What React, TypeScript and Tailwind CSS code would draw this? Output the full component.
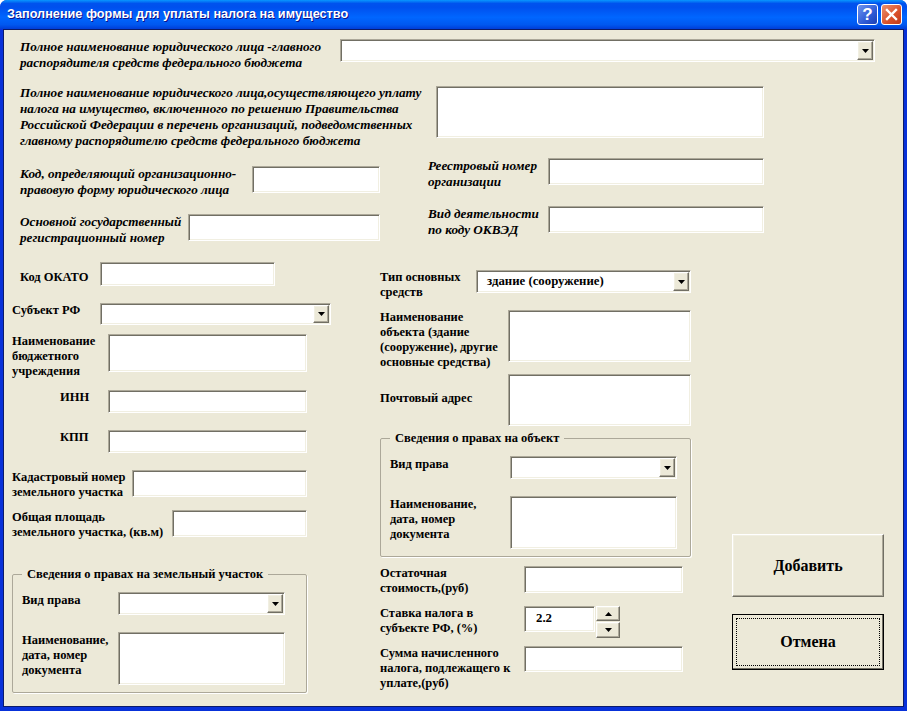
const sunken =
  "border border-[#aca899] border-r-white border-b-white bg-white shadow-[inset_1px_1px_0_#716f64,inset_-1px_-1px_0_#f1efe2]";
const raised =
  "bg-[#ece9d8] border border-white border-r-[#716f64] border-b-[#716f64] shadow-[inset_-1px_-1px_0_#aca899,inset_1px_1px_0_#f1efe2]";

function Box({ className }: { className: string }) {
  return <div className={`${sunken} shrink-0 ${className}`} />;
}

function Arrow({ up }: { up?: boolean }) {
  return (
    <svg width="7" height="4" viewBox="0 0 7 4" className="block">
      <path d={up ? "M3.5 0 L7 4 L0 4 Z" : "M0 0 H7 L3.5 4 Z"} fill="#000" />
    </svg>
  );
}

function Combo({ className, value }: { className: string; value?: string }) {
  return (
    <div className={`${sunken} shrink-0 flex items-stretch p-[1px] ${className}`}>
      <div className="flex-1 pl-[9px] flex items-center text-[12.8px] font-bold">{value}</div>
      <div className={`${raised} w-[16px] flex items-center justify-center`}>
        <Arrow />
      </div>
    </div>
  );
}

function Label({ className, lines, italic }: { className?: string; lines: string[]; italic?: boolean }) {
  return (
    <div className={`shrink-0 font-bold ${italic ? "italic text-[13.2px] leading-[16px]" : "text-[12.5px] leading-[15px]"} ${className ?? ""}`}>
      {lines.map((l) => (
        <div key={l} className="whitespace-nowrap">{l}</div>
      ))}
    </div>
  );
}

function GroupBox({ title, className, labelWidth }: { title: string; className: string; labelWidth: string }) {
  return (
    <div className={`relative border border-[#aca899] rounded-[2px] shadow-[1px_1px_0_#fff] ${className}`}>
      <span className="absolute -top-[8px] left-[9px] px-[5px] bg-[#ece9d8] text-[12.5px] leading-[15px] font-bold whitespace-nowrap">
        {title}
      </span>
      <div className="flex pt-[17px] pl-[9px]">
        <Label className={`${labelWidth} pt-[1px]`} lines={["Вид права"]} />
        <Combo className="w-[167px] h-[23px]" />
      </div>
      <div className="flex mt-[17px] pl-[9px]">
        <Label className={`${labelWidth} pt-[1px]`} lines={["Наименование,", "дата, номер", "документа"]} />
        <Box className="w-[167px] h-[53px]" />
      </div>
    </div>
  );
}

export default function App() {
  return (
    <div
      className="w-[907px] h-[711px] bg-[#0831d9] rounded-t-[7px] flex flex-col overflow-hidden text-black"
      style={{ fontFamily: '"Liberation Serif", "Times New Roman", serif' }}
    >
      {/* title bar */}
      <div className="h-[29px] shrink-0 flex items-center pl-[7px] pr-[5px] bg-[linear-gradient(180deg,#0997ff_0%,#0053ee_12%,#0050ee_25%,#0066ff_60%,#0058f0_85%,#003dd7_100%)]">
        <span className="flex-1 text-white text-[12.7px] font-bold [text-shadow:1px_1px_0_#0f1089]" style={{ fontFamily: '"Liberation Sans", Arial, sans-serif' }}>
          Заполнение формы для уплаты налога на имущество
        </span>
        <div className="w-[21px] h-[21px] mr-[3px] rounded-[3px] border border-white bg-[linear-gradient(135deg,#6d94ee,#2f5bd6_60%,#1c3fb4)] flex items-center justify-center text-white text-[17px] font-bold" style={{ fontFamily: '"Liberation Sans", Arial, sans-serif' }}>
          ?
        </div>
        <div className="w-[21px] h-[21px] rounded-[3px] border border-white bg-[linear-gradient(135deg,#e9916f,#d9502a_60%,#c0391a)] flex items-center justify-center">
          <svg width="13" height="13" viewBox="0 0 13 13">
            <path d="M2 2 L11 11 M11 2 L2 11" stroke="#fff" strokeWidth="2.4" strokeLinecap="square" />
          </svg>
        </div>
      </div>

      {/* window body */}
      <div className="flex-1 mx-[3px] mb-[4px] bg-[#ece9d8] border border-[#0a1a6a] overflow-hidden">
        <div className="flex mt-[9px]">
          <Label italic className="ml-[16px] w-[320px]" lines={["Полное наименование юридического лица -главного", "распорядителя средств федерального бюджета"]} />
          <Combo className="w-[535px] h-[23px]" />
        </div>
        <div className="flex mt-[14px]">
          <Label italic className="ml-[16px] w-[416px]" lines={["Полное наименование юридического лица,осуществляющего уплату", "налога на имущество, включенного по решению Правительства", "Российской Федерации в перечень организаций, подведомственных", "главному распорядителю средств федерального бюджета"]} />
          <Box className="w-[328px] h-[52px] mt-[1px]" />
        </div>

        <div className="flex mt-[9px]">
          <div className="w-[376px] ml-[16px] pt-[8px]">
            <div className="flex">
              <Label italic className="w-[232px]" lines={["Код, определяющий организационно-", "правовую форму юридического лица"]} />
              <Box className="w-[128px] h-[27px]" />
            </div>
            <div className="flex mt-[16px]">
              <Label italic className="w-[168px]" lines={["Основной государственный", "регистрационный номер"]} />
              <Box className="w-[192px] h-[27px]" />
            </div>
          </div>
          <div className="ml-[32px]">
            <div className="flex">
              <Label italic className="w-[120px]" lines={["Реестровый номер", "организации"]} />
              <Box className="w-[216px] h-[27px]" />
            </div>
            <div className="flex mt-[16px]">
              <Label italic className="w-[120px]" lines={["Вид деятельности", "по коду ОКВЭД"]} />
              <Box className="w-[216px] h-[27px]" />
            </div>
          </div>
        </div>

        <div className="flex mt-[16px]">
          {/* left column */}
          <div className="ml-[8px] w-[295px] shrink-0">
            <div className="flex">
              <Label className="w-[88px] pl-[8px] pt-[8px]" lines={["Код ОКАТО"]} />
              <Box className="w-[175px] h-[24px]" />
            </div>
            <div className="flex mt-[17px]">
              <Label className="w-[88px]" lines={["Субъект РФ"]} />
              <Combo className="w-[231px] h-[22px]" />
            </div>
            <div className="flex mt-[9px]">
              <Label className="w-[96px]" lines={["Наименование", "бюджетного", "учреждения"]} />
              <Box className="w-[199px] h-[38px]" />
            </div>
            <div className="flex mt-[11px]">
              <Label className="w-[96px] pl-[48px]" lines={["ИНН"]} />
              <Box className="w-[199px] h-[23px]" />
            </div>
            <div className="flex mt-[17px]">
              <Label className="w-[96px] pl-[48px]" lines={["КПП"]} />
              <Box className="w-[199px] h-[23px]" />
            </div>
            <div className="flex mt-[17px]">
              <Label className="w-[120px]" lines={["Кадастровый номер", "земельного участка"]} />
              <Box className="w-[175px] h-[27px]" />
            </div>
            <div className="flex mt-[10px]">
              <Label className="w-[160px]" lines={["Общая площадь", "земельного участка, (кв.м)"]} />
              <Box className="w-[135px] h-[27px]" />
            </div>
            <GroupBox className="mt-[34px] w-[295px] h-[119px]" labelWidth="w-[96px]" title="Сведения о правах на земельный участок" />
          </div>

          {/* middle column */}
          <div className="ml-[73px] w-[311px] shrink-0 pt-[8px]">
            <div className="flex">
              <Label className="w-[96px]" lines={["Тип основных", "средств"]} />
              <Combo className="w-[215px] h-[23px]" value="здание (сооружение)" />
            </div>
            <div className="flex mt-[10px]">
              <Label className="w-[128px]" lines={["Наименование", "объекта (здание", "(сооружение), другие", "основные средства)"]} />
              <Box className="w-[183px] h-[52px]" />
            </div>
            <div className="flex mt-[4px]">
              <Label className="w-[128px] pt-[17px]" lines={["Почтовый адрес"]} />
              <Box className="w-[183px] h-[52px]" />
            </div>
            <GroupBox className="mt-[12px] w-[311px] h-[119px]" labelWidth="w-[120px]" title="Сведения о правах на объект" />
            <div className="flex mt-[9px]">
              <Label className="w-[144px]" lines={["Остаточная", "стоимость,(руб)"]} />
              <Box className="w-[159px] h-[27px]" />
            </div>
            <div className="flex mt-[10px]">
              <Label className="w-[144px]" lines={["Ставка налога в", "субъекте РФ, (%)"]} />
              <div className={`${sunken} shrink-0 w-[71px] h-[26px] pl-[11px] flex items-center text-[12.8px] font-bold`}>2.2</div>
              <div className="ml-[1px] w-[24px]">
                <div className={`${raised} h-[15px] flex items-center justify-center`}>
                  <Arrow up />
                </div>
                <div className={`${raised} h-[16px] mt-[1px] flex items-center justify-center`}>
                  <Arrow />
                </div>
              </div>
            </div>
            <div className="flex mt-[8px]">
              <Label className="w-[144px]" lines={["Сумма начисленного", "налога, подлежащего к", "уплате,(руб)"]} />
              <Box className="w-[159px] h-[26px]" />
            </div>
          </div>

          {/* buttons */}
          <div className="ml-[41px] w-[152px] shrink-0 pt-[272px]">
            <div className={`${raised} h-[63px] flex items-center justify-center text-[16px] font-bold`}>Добавить</div>
            <div className="mt-[17px] h-[56px] bg-[#ece9d8] border border-black shadow-[inset_-1px_-1px_0_#716f64] p-[3px]">
              <div className="h-full border border-dotted border-black flex items-center justify-center text-[16px] font-bold">Отмена</div>
            </div>
          </div>
        </div>
      </div>
    </div>
  );
}
